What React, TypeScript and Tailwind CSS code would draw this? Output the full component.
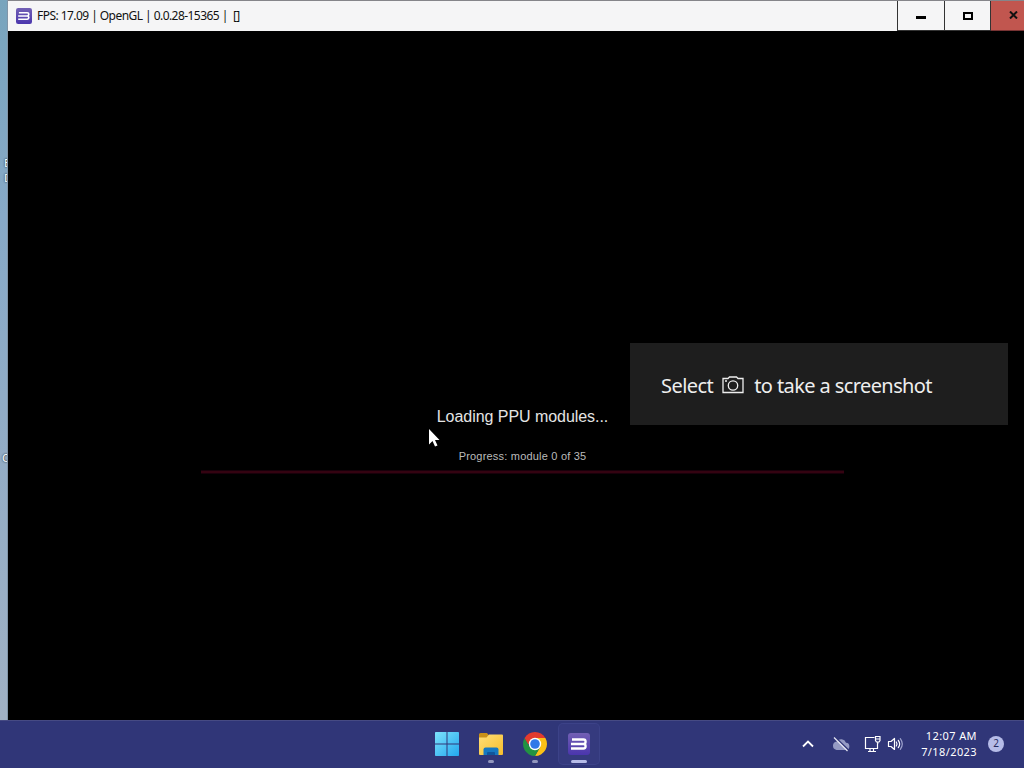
import type { ReactNode } from "react";

const Rpcs3Icon = ({ size }: { size: number }) => (
	<svg width={size} height={size} viewBox="0 0 22 22" className="shrink-0">
		<defs>
			<linearGradient id="rpcs" x1="0" y1="0" x2="0" y2="1">
				<stop offset="0" stopColor="#7260b4" />
				<stop offset="1" stopColor="#4a35ad" />
			</linearGradient>
		</defs>
		<rect width="22" height="22" rx="3" fill="url(#rpcs)" />
		<path
			d="M4 6.500H15.500Q17.600 6.500 17.600 8.700T15.500 11H3M15.500 11Q17.600 11 17.600 13.200T15.500 15.500H3"
			fill="none"
			stroke="#fff"
			strokeWidth="2.300"
		/>
	</svg>
);

const WindowsIcon = () => (
	<svg width="24" height="24" viewBox="0 0 24 24">
		<defs>
			<linearGradient id="win" x1="0" y1="0" x2="1" y2="1">
				<stop offset="0" stopColor="#7de2fb" />
				<stop offset="1" stopColor="#22a7ee" />
			</linearGradient>
		</defs>
		<path
			d="M.8 0H11.500V11.500H0V.8Q0 0 .8 0ZM12.500 0H23.200Q24 0 24 .8V11.500H12.500ZM0 12.500H11.500V24H.8Q0 24 0 23.200ZM12.500 12.500H24V23.200Q24 24 23.200 24H12.500Z"
			fill="url(#win)"
		/>
	</svg>
);

const FolderIcon = () => (
	<svg width="26" height="24" viewBox="0 0 26 24">
		<defs>
			<linearGradient id="folder" x1="0" y1="0" x2="1" y2="1">
				<stop offset="0" stopColor="#ffdf78" />
				<stop offset="1" stopColor="#f6bd2c" />
			</linearGradient>
		</defs>
		<path d="M1 2.500Q1 1 2.500 1H9L11 3.500L9 6H1Z" fill="#c99018" />
		<path d="M1 5.500H8.500L11 2.500H24Q25 2.500 25 3.500V22Q25 23 24 23H2Q1 23 1 22Z" fill="url(#folder)" />
		<path d="M5.500 23V17.500Q5.500 15.500 7.500 15.500H18.500Q20.500 15.500 20.500 17.500V23Z" fill="#1678c2" />
		<path d="M9 23V21Q9 20 10 20H16Q17 20 17 21V23Z" fill="#10559b" />
	</svg>
);

const ChromeIcon = () => (
	<svg width="24" height="24" viewBox="0 0 24 24">
		<path d="M12 12L1.610 6A12 12 0 0 1 22.390 6Z" fill="#e33b2e" />
		<path d="M12 6H22.390A12 12 0 0 1 12 24L17.200 15Z" fill="#fbc116" />
		<path d="M6.800 15L1.610 6A12 12 0 0 0 12 24L17.200 15Z" fill="#229342" />
		<path d="M1.610 6H12V12H5Z" fill="#e33b2e" />
		<circle cx="12" cy="12" r="6.200" fill="#fff" />
		<circle cx="12" cy="12" r="4.800" fill="#2f78e8" />
	</svg>
);

const CameraIcon = () => (
	<svg width="22" height="18" viewBox="0 0 22 18" fill="none" stroke="#eee" strokeWidth="1.300">
		<path d="M1 2.500H6L7.500 1H14.500L16 2.500H21V16.500H1Z" />
		<circle cx="11" cy="9.500" r="4.700" />
		<path d="M3 5H5" />
	</svg>
);

const Cursor = () => (
	<svg width="13" height="20" viewBox="0 0 13 20">
		<path d="M1 1V16.500L4.500 13L7 18.500L9.500 17.400L7 12H11.500Z" fill="#fff" />
	</svg>
);

const CloudOffIcon = () => (
	<svg width="18" height="16" viewBox="0 0 18 16">
		<path
			d="M4.500 14H13.500A3.600 3.600 0 0 0 14 6.800A5.200 5.200 0 0 0 4.800 5.500A4.300 4.300 0 0 0 4.500 14Z"
			fill="#959bc4"
		/>
		<path d="M3.500 1.500L16.500 14" stroke="#303678" strokeWidth="1.500" />
		<path d="M2 1.500L15.500 15" stroke="#e4e6f3" strokeWidth="1.300" />
	</svg>
);

const NetworkIcon = () => (
	<svg width="17" height="18" viewBox="0 0 17 18" fill="none" stroke="#fff" strokeWidth="1.200">
		<path d="M10.500 2.500H1.500V13.500H13.500V8.500M4 16.500H12M6 13.500V16.500M9.500 13.500V16.500" />
		<path d="M11.500 1.500H16V5.500L15 7H12.500L11.500 5.500ZM11.500 4H16M13.700 7V9" />
	</svg>
);

const VolumeIcon = () => (
	<svg width="17" height="16" viewBox="0 0 17 16" fill="none" stroke="#fff" strokeWidth="1.200">
		<path d="M1.500 5.500H4L7.500 2.500V13.500L4 10.500H1.500Z" strokeLinejoin="round" />
		<path d="M9.300 6Q10.800 8 9.300 10M11.300 4.300Q14 8 11.300 11.700" strokeLinecap="round" />
		<path d="M13.300 2.700Q17.300 8 13.300 13.300" stroke="#9da2cd" strokeLinecap="round" />
	</svg>
);

const TaskItem = ({ children, active, running }: { children: ReactNode; active?: boolean; running?: boolean }) => (
	<div
		className={`relative flex h-10 w-10 items-center justify-center rounded ${
			active ? "bg-[#353a7e] ring-1 ring-[#3c4288]" : ""
		}`}
	>
		{children}
		{(active || running) && (
			<span
				className={`absolute bottom-[1px] h-[3px] rounded-full ${
					active ? "w-4 bg-[#b7bce8]" : "w-1.5 bg-[#9297be]"
				}`}
			/>
		)}
	</div>
);

const TitleBar = () => (
	<div className="flex h-[31px] border-t border-[#85858a] bg-[#f5f5f6]">
		<div className="flex flex-1 items-center pl-2 font-['Noto_Sans',sans-serif] text-xs text-[#111]">
			<Rpcs3Icon size={16} />
			<span className="ml-[5px] whitespace-pre tracking-[-0.55px]">
				FPS: 17.09 | OpenGL | 0.0.28-15365 |  []
			</span>
		</div>
		<div className="flex w-12 items-center justify-center border-x border-b border-[#333]">
			<span className="mt-1 h-[3px] w-2.5 bg-black" />
		</div>
		<div className="flex w-[46px] items-center justify-center border-r border-b border-[#333]">
			<span className="h-2 w-2.5 border-2 border-black" />
		</div>
		<div className="flex w-[46px] items-center justify-center border-b border-[#733] bg-[#c1564f] pr-0.5 pb-0.5">
			<svg width="9" height="8" viewBox="0 0 9 8">
				<path d="M1 .5L8 7.500M8 .5L1 7.500" stroke="#111" strokeWidth="2" />
			</svg>
		</div>
	</div>
);

const Toast = () => (
	<div className="absolute top-[343px] left-[630px] flex h-[82px] w-[378px] items-center bg-[#1e1e1e] pt-1 pl-[31px] font-['Noto_Sans',sans-serif] text-[20px] whitespace-nowrap text-[#eee]">
		<span className="tracking-[-0.55px]">Select</span>
		<span className="mr-2.5 ml-[9px] -mt-0.5">
			<CameraIcon />
		</span>
		<span className="tracking-[-0.6px]">to take a screenshot</span>
	</div>
);

const Taskbar = () => (
	<div className="relative flex h-12 items-center justify-end border-t border-[#464a83] bg-[#303678] pb-0.5 font-['Noto_Sans',sans-serif] text-white">
		<div className="absolute left-[427px] flex gap-1">
			<TaskItem>
				<WindowsIcon />
			</TaskItem>
			<TaskItem running>
				<FolderIcon />
			</TaskItem>
			<TaskItem running>
				<ChromeIcon />
			</TaskItem>
			<TaskItem active>
				<Rpcs3Icon size={22} />
			</TaskItem>
		</div>
		<svg width="12" height="8" viewBox="0 0 12 8" className="mr-[18px]">
			<path d="M1 6.500L6 1.500L11 6.500" fill="none" stroke="#fff" strokeWidth="1.800" />
		</svg>
		<CloudOffIcon />
		<div className="ml-3.5 flex items-center gap-1.5">
			<NetworkIcon />
			<VolumeIcon />
		</div>
		<div className="ml-4 w-[57px] text-right text-[11px] leading-4 tracking-[0.4px] whitespace-nowrap">
			<div>12:07 AM</div>
			<div>7/18/2023</div>
		</div>
		<div className="mr-5 ml-[11px] flex size-4 items-center justify-center rounded-full bg-[#b6bce8] text-[10px] text-[#252a60]">
			2
		</div>
	</div>
);

export default function App() {
	return (
		<div className="relative flex h-[768px] w-[1024px] flex-col overflow-hidden bg-black">
			<div className="flex h-[720px]">
				<div className="flex w-2 shrink-0 flex-col overflow-hidden border-r border-[#8195a8] bg-linear-to-b from-[#78a4bd] via-[#87a9c7] via-30% to-[#a0b1c4] pl-1 font-['Noto_Sans',sans-serif] text-[11px] leading-[15px] text-white">
					<div className="mt-[155px] text-shadow-[0_0_2px_#000]">
						<div>E</div>
						<div>D</div>
					</div>
					<div className="mt-[265px] -ml-0.5 text-shadow-[0_0_2px_#000]">C</div>
				</div>
				<div className="w-[1029px] shrink-0">
					<TitleBar />
					<div className="flex flex-col items-center pt-[376px] font-['Liberation_Sans',sans-serif] whitespace-nowrap">
						<div className="text-base leading-5 tracking-[-0.05px] text-[#e4e4e4]">Loading PPU modules...</div>
						<div className="mt-[21px] text-[11px] leading-4 tracking-[0.2px] text-[#bbb]">
							Progress: module 0 of 35
						</div>
						<div className="mt-[6px] h-1 w-[643px] border-y border-[#18000a] bg-[#340311]" />
					</div>
				</div>
			</div>
			<Taskbar />
			<Toast />
			<div className="absolute top-[428px] left-[428px]">
				<Cursor />
			</div>
		</div>
	);
}
